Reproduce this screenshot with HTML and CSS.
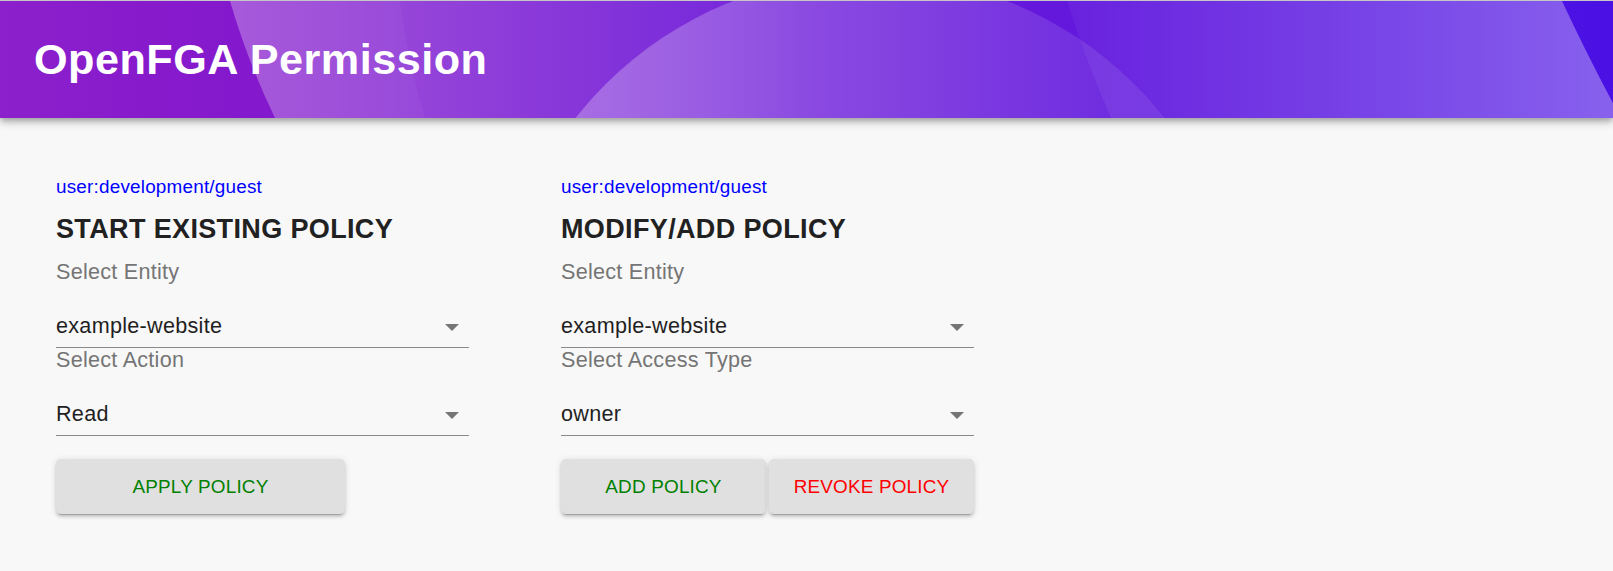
FILE: index.html
```html
<!DOCTYPE html>
<html lang="en">
<head>
<meta charset="utf-8">
<title>OpenFGA Permission</title>
<link rel="stylesheet" href="styles.css">
</head>
<body>
<header class="appbar">
  <svg class="appbar-bg" viewBox="0 0 1613 118" preserveAspectRatio="none" aria-hidden="true">
    <defs>
      <linearGradient id="gA" x1="230" y1="0" x2="820" y2="0" gradientUnits="userSpaceOnUse">
        <stop offset="0" stop-color="#fff" stop-opacity="0.26"/>
        <stop offset="1" stop-color="#fff" stop-opacity="0"/>
      </linearGradient>
      <linearGradient id="gC" x1="500" y1="0" x2="1240" y2="0" gradientUnits="userSpaceOnUse">
        <stop offset="0" stop-color="#fff" stop-opacity="0.3"/>
        <stop offset="1" stop-color="#fff" stop-opacity="0.05"/>
      </linearGradient>
      <linearGradient id="gR" x1="1067" y1="0" x2="1613" y2="0" gradientUnits="userSpaceOnUse">
        <stop offset="0" stop-color="#fff" stop-opacity="0.04"/>
        <stop offset="1" stop-color="#fff" stop-opacity="0.34"/>
      </linearGradient>
    </defs>
    <path d="M230 0 Q248 62 275 118 L900 118 L900 0 Z" fill="url(#gA)"/>
    <path d="M230 0 Q248 62 275 118 L425 118 Q408 60 400 0 Z" fill="#fff" fill-opacity="0.035"/>
    <circle cx="870" cy="347" r="373" fill="url(#gC)"/>
    <path d="M1067 0 Q1086 60 1111 118 L1613 118 L1613 103 Q1585 50 1562 0 Z" fill="url(#gR)"/>
  </svg>
  <h1 class="title">OpenFGA Permission</h1>
</header>
<main class="content">
  <section class="panel">
    <div class="user">user:development/guest</div>
    <h2 class="panel-title">START EXISTING POLICY</h2>
    <div class="field-label">Select Entity</div>
    <div class="select"><span class="select-value">example-website</span><span class="caret"></span></div>
    <div class="field-label">Select Action</div>
    <div class="select"><span class="select-value">Read</span><span class="caret"></span></div>
    <div class="actions">
      <button class="btn btn-wide btn-green">Apply Policy</button>
    </div>
  </section>
  <section class="panel">
    <div class="user">user:development/guest</div>
    <h2 class="panel-title">MODIFY/ADD POLICY</h2>
    <div class="field-label">Select Entity</div>
    <div class="select"><span class="select-value">example-website</span><span class="caret"></span></div>
    <div class="field-label">Select Access Type</div>
    <div class="select"><span class="select-value">owner</span><span class="caret"></span></div>
    <div class="actions actions-split">
      <button class="btn btn-green">Add Policy</button>
      <button class="btn btn-red">Revoke Policy</button>
    </div>
  </section>
</main>
</body>
</html>
```
FILE: styles.css
```css
html, body {
  margin: 0;
  padding: 0;
}

body {
  background: #f8f8f8;
  font-family: "Liberation Sans", Arial, sans-serif;
  min-height: 571px;
}

.appbar {
  position: relative;
  z-index: 1;
  height: 118px;
  box-sizing: border-box;
  border-top: 1px solid #c6c6c6;
  padding: 32px 0 0 34px;
  overflow: hidden;
  background: linear-gradient(90deg, #8c20cc 0%, #8418cc 15%, #7420d8 43%, #6418dc 65%, #4a10e4 100%);
  box-shadow: 0 3px 5px -1px rgba(0, 0, 0, 0.2), 0 5px 7px 0 rgba(0, 0, 0, 0.14), 0 1px 13px 0 rgba(0, 0, 0, 0.12);
}

.appbar-bg {
  position: absolute;
  left: 0;
  top: 0;
  width: 100%;
  height: 100%;
}

.title {
  position: relative;
  margin: 0;
  font-size: 43.2px;
  line-height: 52px;
  font-weight: 700;
  letter-spacing: 0.48px;
  color: #fff;
}

.content {
  display: grid;
  grid-template-columns: 413px 413px;
  column-gap: 92px;
  padding: 58px 0 0 56px;
}

.panel {
  display: flex;
  flex-direction: column;
}

.user {
  font-size: 18.9px;
  line-height: 22px;
  letter-spacing: 0.2px;
  color: #0000ff;
}

.panel-title {
  margin: 15px 0 0;
  font-size: 27px;
  line-height: 32px;
  font-weight: 700;
  letter-spacing: 0.36px;
  color: #212121;
}

.field-label {
  margin-top: 15px;
  font-size: 21.6px;
  line-height: 23px;
  letter-spacing: 0.26px;
  color: #757575;
}

.select + .field-label {
  margin-top: 0;
}

.select {
  display: flex;
  align-items: flex-start;
  padding: 30px 0 8px;
  border-bottom: 1px solid #8a8a8a;
}

.select-value {
  flex: 1;
  font-size: 21.6px;
  line-height: 26px;
  letter-spacing: 0.28px;
  color: #1f1f1f;
}

.caret {
  width: 0;
  height: 0;
  border-left: 7px solid transparent;
  border-right: 7px solid transparent;
  border-top: 7px solid #757575;
  margin: 11px 10px 0 0;
}

.actions {
  display: flex;
  gap: 3px;
  margin-top: 23px;
}

.btn {
  height: 55px;
  border: 0;
  border-radius: 5px;
  background: #e0e0e0;
  font-family: inherit;
  font-size: 18.9px;
  letter-spacing: 0.19px;
  text-transform: uppercase;
  cursor: pointer;
  box-shadow: 0 4px 1px -3px rgba(0, 0, 0, 0.2), 0 3px 3px 0 rgba(0, 0, 0, 0.14), 0 1px 7px 0 rgba(0, 0, 0, 0.12);
}

.btn-wide {
  width: 289px;
}

.actions-split .btn {
  flex: 1;
}

.btn-green {
  color: #008000;
}

.btn-red {
  color: #ff0000;
}
```
